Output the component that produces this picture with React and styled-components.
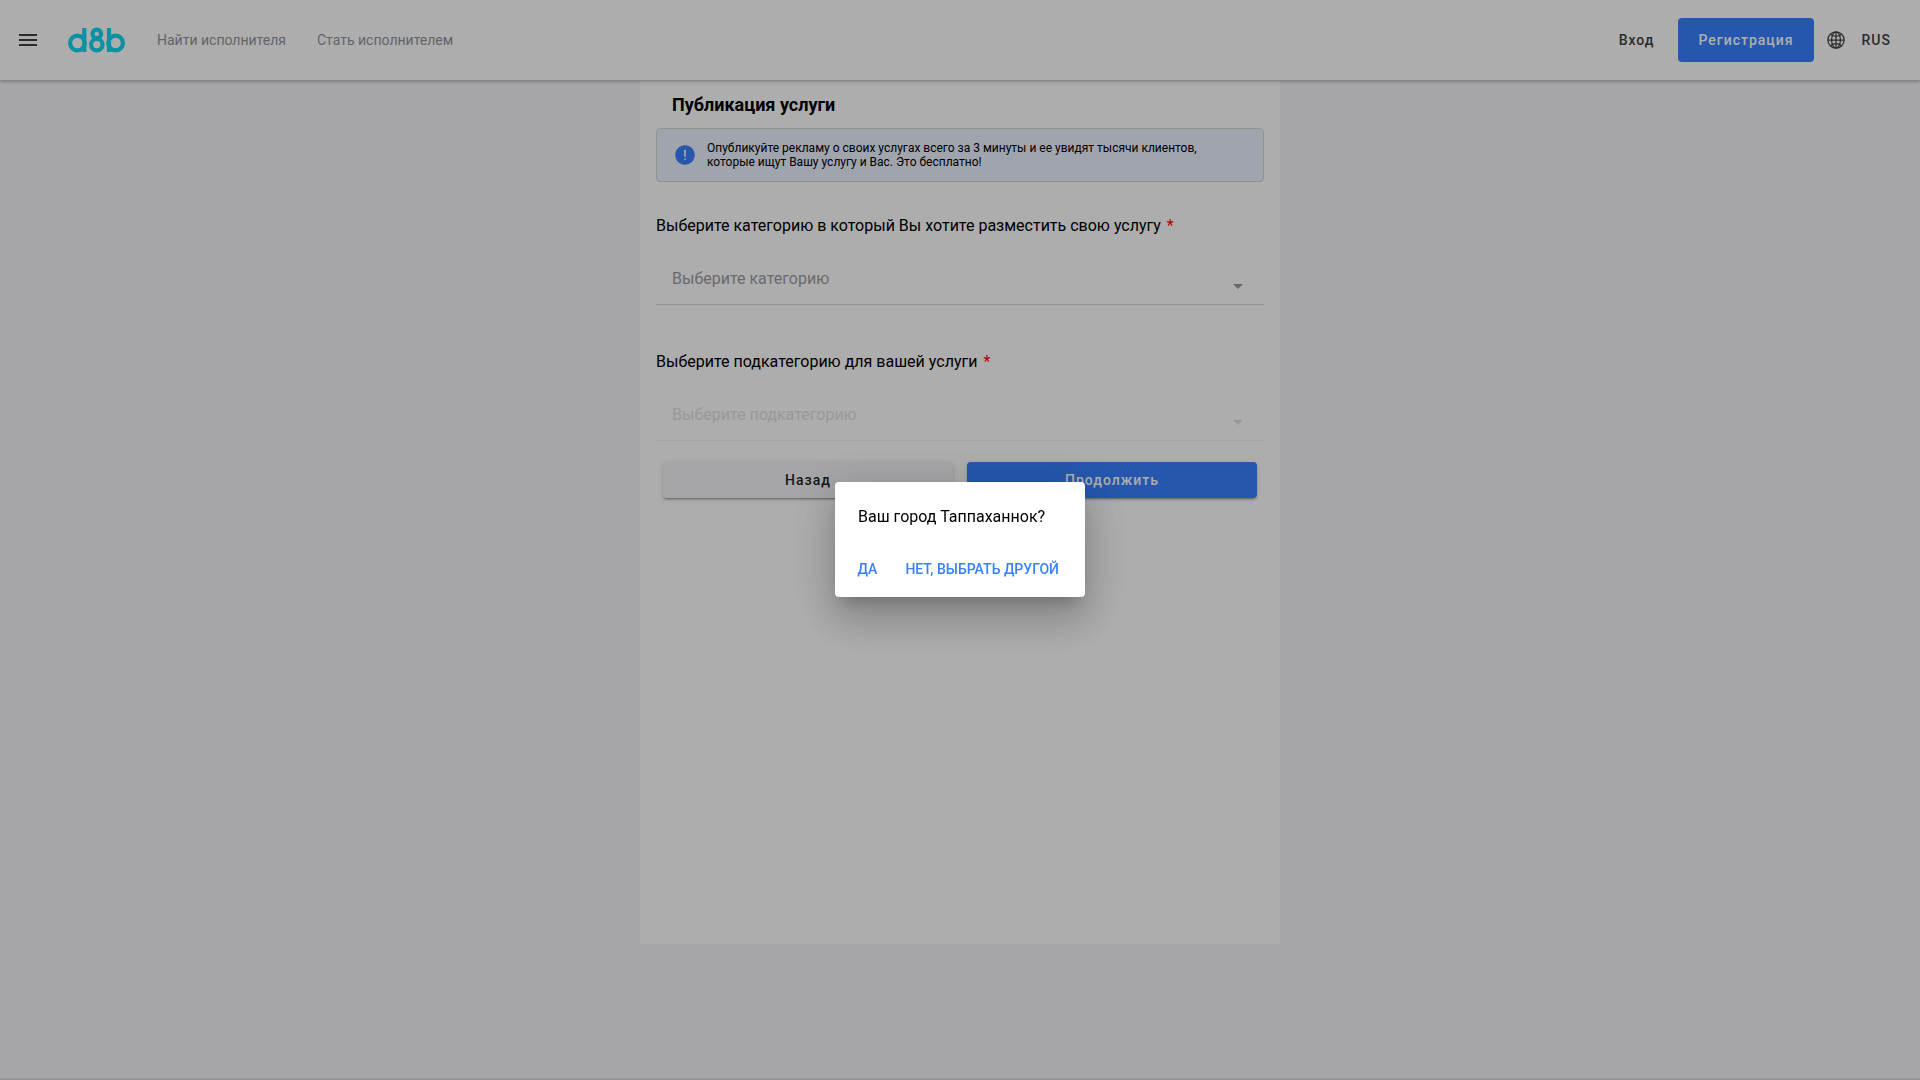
import React from "react";
import styled, { createGlobalStyle } from "styled-components";
import { IoMdMenu } from "react-icons/io";
import { IoGlobeOutline, IoAlertCircle } from "react-icons/io5";

const GlobalStyle = createGlobalStyle`
  *, *::before, *::after { box-sizing: border-box; }
  body {
    margin: 0;
    font-family: Roboto, "Noto Sans", sans-serif;
    font-size: 16px;
    color: #000;
    background: #f5f5f8;
  }
  button, select { font-family: inherit; }
`;

const Page = styled.div`
  min-height: 100vh;
  display: flex;
  flex-direction: column;
`;

const Header = styled.header`
  position: relative;
  height: 80px;
  padding: 0 29px 0 16px;
  display: flex;
  align-items: center;
  justify-content: space-between;
  background: #fff;
  box-shadow: 0 1px 4px rgba(0, 0, 0, 0.36);
`;

const HeaderGroup = styled.div`
  display: flex;
  align-items: center;
`;

const IconButton = styled.button`
  display: flex;
  padding: 0;
  border: 0;
  background: none;
  color: #424242;
  cursor: pointer;
`;

const LogoLink = styled.a`
  display: flex;
  margin-left: 28px;
`;

const Nav = styled.nav`
  display: flex;
  gap: 31px;
  margin-left: 32px;
`;

const NavLink = styled.a`
  font-size: 14px;
  line-height: 20px;
  color: #92949c;
  text-decoration: none;
`;

const Button = styled.button`
  height: ${(p) => (p.$tall ? 44 : 36)}px;
  padding: 0 20px;
  border: 0;
  border-radius: 4px;
  font-size: 14px;
  font-weight: 500;
  letter-spacing: 1px;
  cursor: pointer;
  color: ${(p) => (p.$primary ? "#fff" : p.$plain ? "#424242" : "#222428")};
  background: ${(p) => (p.$primary ? "#3880ff" : p.$plain ? "none" : "#f5f5f8")};
  box-shadow: ${(p) =>
    p.$raised
      ? "0 3px 1px -2px rgba(0,0,0,.2), 0 2px 2px rgba(0,0,0,.14), 0 1px 5px rgba(0,0,0,.12)"
      : "none"};
`;

const AuthButtons = styled.div`
  display: flex;
  gap: 4px;
`;

const LangButton = styled(Button)`
  display: flex;
  align-items: center;
  gap: 16px;
  padding: 0;
  margin-left: 12px;
`;

const Main = styled.main`
  width: 100%;
  max-width: 640px;
  min-height: 80vh;
  margin: 0 auto;
  padding: 0 16px;
  background: #fff;
`;

const Title = styled.h1`
  margin: 0;
  padding: 14px 16px 12px;
  font-size: 18px;
  line-height: 22px;
  font-weight: 700;
`;

const Notice = styled.div`
  display: flex;
  align-items: center;
  gap: 10px;
  padding: 12px 40px 12px 16px;
  border: 1px solid #d7d8da;
  border-radius: 4px;
  background: #ebf2ff;
  font-size: 12px;
  line-height: 14px;
  svg { flex: none; color: #3880ff; }
  p { margin: 0; }
`;

const Field = styled.div`
  padding-top: 32px;
  & + & { padding-top: 45px; }
`;

const Label = styled.label`
  display: block;
  font-size: 16px;
  line-height: 24px;
`;

const Required = styled.span`
  margin-left: 6px;
  color: #ff0000;
`;

const SelectBox = styled.div`
  display: grid;
  align-items: center;
  height: 53px;
  margin-top: 14px;
  border-bottom: 1px solid #d7d8da;
  opacity: ${(p) => (p.$off ? 0.3 : 1)};
  & > * { grid-area: 1 / 1; }
`;

const Select = styled.select`
  width: 100%;
  height: 100%;
  padding: 0 48px 0 16px;
  border: 0;
  background: none;
  appearance: none;
  font-size: 16px;
  color: #9c9da3;
  opacity: 1;
`;

const Arrow = styled.span`
  justify-self: end;
  margin: 16px 21px 0 0;
  border: 5px solid transparent;
  border-top-color: #999;
  border-bottom: 0;
  pointer-events: none;
`;

const Actions = styled.div`
  display: grid;
  grid-template-columns: 1fr 1fr;
  gap: 14px;
  padding: 21px 7px;
`;

const Footer = styled.footer`
  height: 2px;
  margin-top: auto;
  background: linear-gradient(rgba(0, 0, 0, 0.06), rgba(0, 0, 0, 0.14));
`;

const Backdrop = styled.div`
  position: fixed;
  inset: 0;
  display: flex;
  align-items: center;
  justify-content: center;
  padding-bottom: 1px;
  background: rgba(0, 0, 0, 0.32);
`;

const Dialog = styled.div`
  min-width: 250px;
  max-width: 280px;
  border-radius: 4px;
  background: #fff;
  box-shadow: 0 11px 15px -7px rgba(0, 0, 0, 0.2), 0 24px 38px 3px rgba(0, 0, 0, 0.14),
    0 9px 46px 8px rgba(0, 0, 0, 0.12);
`;

const DialogText = styled.h2`
  margin: 0;
  padding: 24px 23px 16px;
  font-size: 16px;
  line-height: 22px;
  font-weight: 400;
`;

const DialogActions = styled.div`
  display: flex;
  justify-content: flex-end;
  gap: 8px;
  padding: 8px 16px 10px 8px;
`;

const DialogButton = styled.button`
  padding: 10px;
  border: 0;
  background: none;
  font-size: 14px;
  line-height: 15px;
  font-weight: 500;
  text-transform: uppercase;
  white-space: nowrap;
  color: #3880ff;
  cursor: pointer;
`;

function Logo() {
  return (
    <svg width="57" height="26" viewBox="0 0 57 26" fill="none" stroke="#10d8f0" strokeWidth="4.2" aria-hidden="true">
      <circle cx="9.4" cy="16" r="7.3" />
      <line x1="16.3" y1="1" x2="16.3" y2="25" />
      <circle cx="28.8" cy="6.9" r="4.3" />
      <circle cx="28.8" cy="17.7" r="5.7" />
      <line x1="41" y1="1" x2="41" y2="25" />
      <circle cx="47.6" cy="16" r="7.3" />
    </svg>
  );
}

function SelectField({ id, label, placeholder, disabled }) {
  return (
    <Field>
      <Label htmlFor={id}>
        {label}
        <Required>*</Required>
      </Label>
      <SelectBox $off={disabled}>
        <Select id={id} disabled={disabled} defaultValue="">
          <option value="">{placeholder}</option>
        </Select>
        <Arrow />
      </SelectBox>
    </Field>
  );
}

export default function App() {
  return (
    <>
      <GlobalStyle />
      <Page>
        <Header>
          <HeaderGroup>
            <IconButton aria-label="Меню">
              <IoMdMenu size={24} />
            </IconButton>
            <LogoLink href="#" aria-label="d8b">
              <Logo />
            </LogoLink>
            <Nav>
              <NavLink href="#">Найти исполнителя</NavLink>
              <NavLink href="#">Стать исполнителем</NavLink>
            </Nav>
          </HeaderGroup>
          <HeaderGroup>
            <AuthButtons>
              <Button $plain $tall>Вход</Button>
              <Button $primary $tall>Регистрация</Button>
            </AuthButtons>
            <LangButton $plain $tall>
              <IoGlobeOutline size={20} />
              RUS
            </LangButton>
          </HeaderGroup>
        </Header>
        <Main>
          <Title>Публикация услуги</Title>
          <Notice>
            <IoAlertCircle size={24} />
            <p>
              Опубликуйте рекламу о своих услугах всего за 3 минуты и ее увидят тысячи клиентов,
              которые ищут Вашу услугу и Вас. Это бесплатно!
            </p>
          </Notice>
          <SelectField
            id="category"
            label="Выберите категорию в который Вы хотите разместить свою услугу"
            placeholder="Выберите категорию"
          />
          <SelectField
            id="subcategory"
            label="Выберите подкатегорию для вашей услуги"
            placeholder="Выберите подкатегорию"
            disabled
          />
          <Actions>
            <Button $raised>Назад</Button>
            <Button $raised $primary>Продолжить</Button>
          </Actions>
        </Main>
        <Footer />
      </Page>
      <Backdrop>
        <Dialog role="alertdialog" aria-labelledby="city-question">
          <DialogText id="city-question">Ваш город Таппаханнок?</DialogText>
          <DialogActions>
            <DialogButton>Да</DialogButton>
            <DialogButton>Нет, выбрать другой</DialogButton>
          </DialogActions>
        </Dialog>
      </Backdrop>
    </>
  );
}
